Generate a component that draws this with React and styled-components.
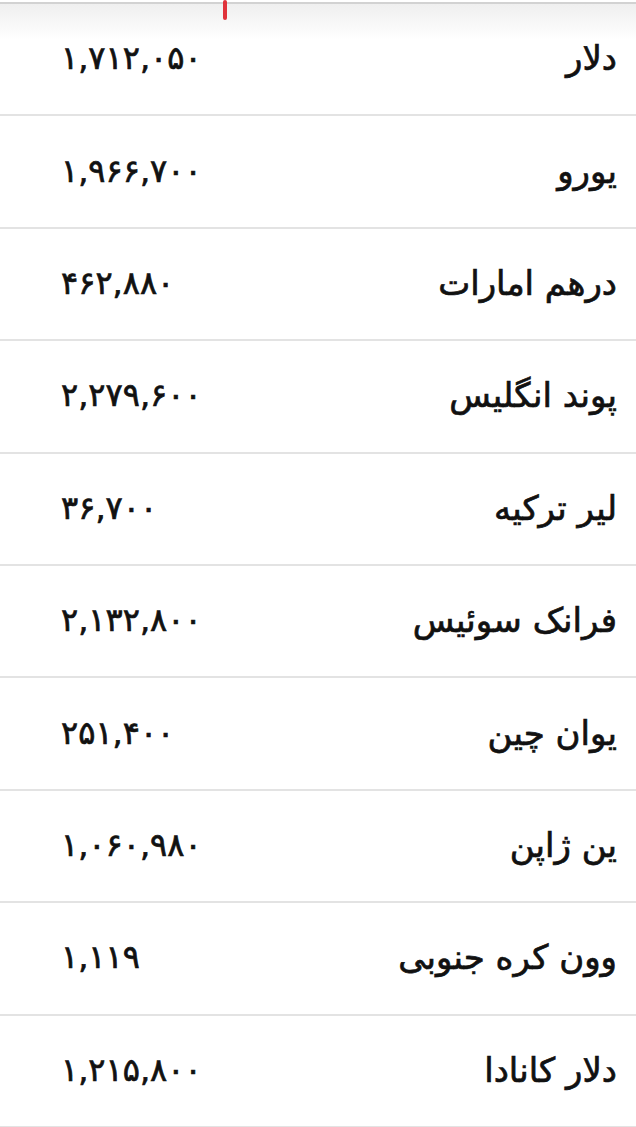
import React from "react";
import styled, { createGlobalStyle } from "styled-components";

const Global = createGlobalStyle`
  html, body { margin: 0; padding: 0; background: #ffffff; }
  body { font-family: "DejaVu Sans", "Noto Sans", sans-serif; }
`;

const Page = styled.div`
  position: relative;
  width: 636px;
  direction: rtl;
  background: #ffffff;
`;

const TopEdge = styled.div`
  height: 2px;
  background: #ffffff;
  border-bottom: 2px solid #d2d2d2;
`;

const Marker = styled.div`
  position: absolute;
  left: 223px;
  top: 0;
  width: 4px;
  height: 20px;
  border-radius: 2px;
  background: #e0323a;
`;

const List = styled.div`
  display: flex;
  flex-direction: column;
  background: linear-gradient(#efefef 0px, #ffffff 36px);
`;

const Row = styled.div`
  display: flex;
  align-items: center;
  justify-content: space-between;
  height: 110.4px;
  padding: 0 19px 0 61px;
  border-bottom: 2px solid #e3e3e3;
  box-sizing: content-box;
`;

const Name = styled.span`
  font-size: 34px;
  color: #111111;
  line-height: 1;
  padding-bottom: 2px;
  -webkit-text-stroke: 0.7px #111111;
`;

const Value = styled.span`
  font-size: 32px;
  color: #111111;
  line-height: 1;
  direction: ltr;
  padding-bottom: 2px;
  -webkit-text-stroke: 0.7px #111111;
`;

const rates = [
  ["دلار", "۱,۷۱۲,۰۵۰"],
  ["یورو", "۱,۹۶۶,۷۰۰"],
  ["درهم امارات", "۴۶۲,۸۸۰"],
  ["پوند انگلیس", "۲,۲۷۹,۶۰۰"],
  ["لیر ترکیه", "۳۶,۷۰۰"],
  ["فرانک سوئیس", "۲,۱۳۲,۸۰۰"],
  ["یوان چین", "۲۵۱,۴۰۰"],
  ["ین ژاپن", "۱,۰۶۰,۹۸۰"],
  ["وون کره جنوبی", "۱,۱۱۹"],
  ["دلار کانادا", "۱,۲۱۵,۸۰۰"],
];

export default function App() {
  return (
    <Page>
      <Global />
      <TopEdge />
      <List>
        {rates.map(([name, value]) => (
          <Row key={name}>
            <Name>{name}</Name>
            <Value>{value}</Value>
          </Row>
        ))}
      </List>
      <Marker />
    </Page>
  );
}
